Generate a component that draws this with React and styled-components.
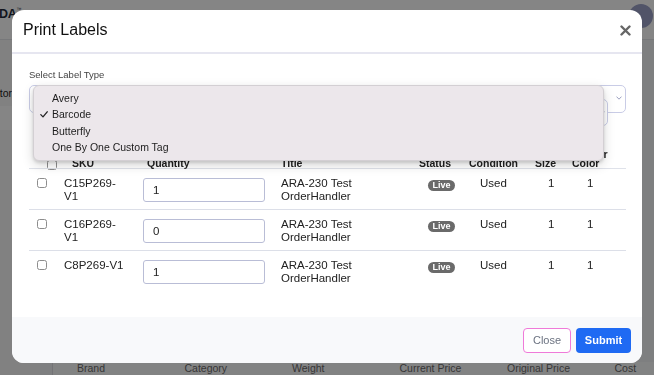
import React, { useState } from "react";
import styled, { createGlobalStyle } from "styled-components";

const GlobalStyle = createGlobalStyle`
  html, body {
    margin: 0;
    width: 100%;
    height: 100%;
    overflow: hidden;
    font-family: "Liberation Sans", Arial, sans-serif;
  }
  #root {
    height: 100%;
  }
`;

const labelTypes = ["Avery", "Barcode", "Butterfly", "One By One Custom Tag"];

const columns = [
  { key: "check", width: 29, headPad: 18, cellPad: 8 },
  { key: "sku", label: "SKU", width: 79, headPad: 14, cellPad: 6 },
  { key: "qty", label: "Quantity", width: 138, headPad: 10, cellPad: 6 },
  { key: "title", label: "Title", width: 136, headPad: 6, cellPad: 6 },
  { key: "status", label: "Status", width: 51, headPad: 8, cellPad: 17 },
  { key: "condition", label: "Condition", width: 65, headPad: 7, cellPad: 18 },
  { key: "size", label: "Size", width: 38, headPad: 8, cellPad: 21 },
  { key: "color", label: "Vendor Color", width: 61, headPad: 7, cellPad: 22 },
];

const initialRows = [
  { sku: "C15P269-V1", qty: "1" },
  { sku: "C16P269-V1", qty: "0" },
  { sku: "C8P269-V1", qty: "1" },
];

const backColumns = ["Brand", "Category", "Weight", "Current Price", "Original Price", "Cost"];

const Chevron = () => (
  <svg width="6" height="4" viewBox="0 0 6 4">
    <polyline points="0.5,0.6 3,3.2 5.5,0.6" fill="none" stroke="#9094b8" strokeWidth="0.9" />
  </svg>
);

const CheckMark = () => (
  <svg width="8" height="7" viewBox="0 0 8 7">
    <polyline points="0.8,3.6 3,5.9 7.2,0.8" fill="none" stroke="#222" strokeWidth="1.3" strokeLinecap="round" strokeLinejoin="round" />
  </svg>
);

const CloseIcon = () => (
  <svg width="11" height="11" viewBox="0 0 11 11">
    <path d="M1.5 1.5 L9.5 9.5 M9.5 1.5 L1.5 9.5" stroke="#666" strokeWidth="2.4" strokeLinecap="round" />
  </svg>
);

export default function App() {
  const [rows, setRows] = useState(initialRows);

  const setQty = (index, value) => {
    setRows(rows.map((row, i) => (i === index ? { ...row, qty: value } : row)));
  };

  return (
    <>
      <GlobalStyle />
      <Page>
        <TopBar>
          <Logo>
            DA<sup>™</sup>
          </Logo>
          <UserArea>
            <Avatar />
            <UserText>
              <span>Jo</span>
              <span>jo</span>
            </UserText>
          </UserArea>
        </TopBar>
        <Workspace>
          <Sidebar>
            <NavItem>Monitor</NavItem>
            <NavItem $active>Inventory</NavItem>
          </Sidebar>
          <Main>
            <ColumnBar>
              <ColumnLabel />
              {backColumns.map((name) => (
                <ColumnLabel key={name}>{name}</ColumnLabel>
              ))}
            </ColumnBar>
          </Main>
        </Workspace>
      </Page>

      <Overlay>
        <Modal>
          <ModalHeader>
            <ModalTitle>Print Labels</ModalTitle>
            <IconButton aria-label="Close">
              <CloseIcon />
            </IconButton>
          </ModalHeader>

          <ModalBody>
            <FieldLabel>Select Label Type</FieldLabel>
            <SelectWrap>
              <SelectBox>
                <Chevron />
              </SelectBox>
              <SecondSelect>
                <Chevron />
              </SecondSelect>
              <OptionMenu>
                {labelTypes.map((type) => (
                  <Option key={type}>
                    {type === "Barcode" && (
                      <Tick>
                        <CheckMark />
                      </Tick>
                    )}
                    {type}
                  </Option>
                ))}
              </OptionMenu>
            </SelectWrap>

            <Table>
              <colgroup>
                {columns.map((col) => (
                  <col key={col.key} style={{ width: col.width }} />
                ))}
              </colgroup>
              <thead>
                <tr>
                  {columns.map((col) => (
                    <HeadCell key={col.key} $pad={col.headPad}>
                      {col.key === "check" ? <Checkbox type="checkbox" $head /> : col.label}
                    </HeadCell>
                  ))}
                </tr>
              </thead>
              <tbody>
                {rows.map((row, i) => (
                  <Row key={row.sku}>
                    <Cell $pad={8} $top={9}>
                      <Checkbox type="checkbox" />
                    </Cell>
                    <SkuCell $pad={6}>{row.sku}</SkuCell>
                    <Cell $pad={6} $top={9}>
                      <QtyInput value={row.qty} onChange={(e) => setQty(i, e.target.value)} />
                    </Cell>
                    <Cell $pad={6}>ARA-230 Test OrderHandler</Cell>
                    <Cell $pad={17} $top={9}>
                      <Badge>Live</Badge>
                    </Cell>
                    <Cell $pad={18}>Used</Cell>
                    <Cell $pad={21}>1</Cell>
                    <Cell $pad={22}>1</Cell>
                  </Row>
                ))}
              </tbody>
            </Table>
          </ModalBody>

          <ModalFooter>
            <CloseButton>Close</CloseButton>
            <SubmitButton>Submit</SubmitButton>
          </ModalFooter>
        </Modal>
      </Overlay>
    </>
  );
}

/* page behind the dialog */

const Page = styled.div`
  height: 100vh;
  display: flex;
  flex-direction: column;
  background: #f2f3f5;
`;

const TopBar = styled.header`
  height: 40px;
  flex-shrink: 0;
  display: flex;
  justify-content: space-between;
  align-items: flex-start;
  background: #fff;
  border-bottom: 1px solid #e4e6ea;
  box-sizing: border-box;
`;

const Logo = styled.div`
  margin-left: -1px;
  padding-top: 6px;
  font-size: 12.5px;
  font-weight: 700;
  color: #1f2a3a;
  letter-spacing: -0.3px;

  sup {
    font-size: 5px;
    font-weight: 400;
    vertical-align: 7px;
  }
`;

const UserArea = styled.div`
  display: flex;
  gap: 4px;
  padding-top: 4px;
  margin-right: -14px;
`;

const Avatar = styled.div`
  width: 24px;
  height: 24px;
  border-radius: 50%;
  background: #9ba2c8;
`;

const UserText = styled.div`
  display: flex;
  flex-direction: column;
  font-size: 10px;
  line-height: 11px;
  color: #333;
`;

const Workspace = styled.div`
  flex: 1;
  display: flex;
  min-height: 0;
`;

const Sidebar = styled.nav`
  width: 40px;
  flex-shrink: 0;
  background: #f7f7f8;
  padding-top: 45px;
  display: flex;
  flex-direction: column;
  gap: 5px;
`;

const NavItem = styled.div`
  width: ${(p) => (p.$active ? "40px" : "12px")};
  height: ${(p) => (p.$active ? "24px" : "16px")};
  display: flex;
  justify-content: flex-end;
  align-items: center;
  overflow: hidden;
  white-space: nowrap;
  font-size: 10.5px;
  background: ${(p) => (p.$active ? "#ffffff" : "transparent")};
  color: ${(p) => (p.$active ? "transparent" : "#222")};
`;

const Main = styled.main`
  flex: 1;
  display: flex;
  flex-direction: column;
  justify-content: flex-end;
  padding-left: 12px;
`;

const ColumnBar = styled.div`
  height: 13px;
  display: grid;
  grid-template-columns: 13px repeat(6, 107.5px);
  background: #fafbfc;
  border-left: 1px solid #dcdde2;
`;

const ColumnLabel = styled.div`
  padding-left: 11px;
  font-size: 10.5px;
  line-height: 13px;
  color: #6a6a6a;
  white-space: nowrap;
`;

/* dialog */

const Overlay = styled.div`
  position: fixed;
  inset: 0;
  background: rgba(0, 0, 0, 0.48);
  padding: 10px 12px;
  display: flex;
  align-items: flex-start;
`;

const Modal = styled.div`
  width: 630px;
  height: 353px;
  display: flex;
  flex-direction: column;
  background: #fff;
  border-radius: 12px;
  overflow: hidden;
`;

const ModalHeader = styled.div`
  height: 44px;
  flex-shrink: 0;
  box-sizing: border-box;
  display: flex;
  justify-content: space-between;
  align-items: center;
  padding: 0 11px 2px 11px;
  border-bottom: 2px solid #e6e6f0;
`;

const ModalTitle = styled.h2`
  margin: 0;
  font-size: 16px;
  font-weight: 400;
  color: #111;
`;

const IconButton = styled.button`
  padding: 0;
  border: none;
  background: none;
  display: flex;
  cursor: pointer;
`;

const ModalBody = styled.div`
  flex: 1;
  padding: 15px 16px 0 17px;
`;

const FieldLabel = styled.div`
  font-size: 9.5px;
  line-height: 12px;
  color: #444;
  margin-bottom: 4px;
`;

const SelectWrap = styled.div`
  position: relative;
  height: 28px;
`;

const SelectBox = styled.div`
  height: 28px;
  box-sizing: border-box;
  display: flex;
  justify-content: flex-end;
  align-items: center;
  padding: 0 3px 2px 0;
  border: 1px solid #c9cce6;
  border-radius: 5px;
  background: #fff;
`;

const SecondSelect = styled(SelectBox)`
  position: absolute;
  top: 14px;
  left: 4px;
  right: 18px;
  height: 27px;
  padding: 0 2px 0 0;
`;

const OptionMenu = styled.div`
  position: absolute;
  top: 0;
  left: 4px;
  right: 22px;
  padding: 4px 0 4px;
  background: #ece7eb;
  border: 1px solid #d3cfd3;
  border-radius: 6px;
  box-shadow: 0 2px 3px rgba(0, 0, 0, 0.12), 0 4px 12px rgba(0, 0, 0, 0.16);
`;

const Option = styled.div`
  position: relative;
  height: 16.4px;
  line-height: 16.4px;
  padding-left: 18px;
  font-size: 10.5px;
  color: #1d1d1d;
`;

const Tick = styled.span`
  position: absolute;
  left: 6px;
  top: 5px;
  display: flex;
`;

const Table = styled.table`
  width: 597px;
  margin-top: 37px;
  border-collapse: collapse;
  table-layout: fixed;
  font-size: 11.5px;
  color: #222;
`;

const HeadCell = styled.th`
  padding: 0 0 0 ${(p) => p.$pad}px;
  vertical-align: bottom;
  text-align: left;
  font-size: 10.5px;
  line-height: 9px;
  font-weight: 700;
  color: #222;
  border-bottom: 1px solid #dfe2ea;
`;

const Row = styled.tr`
  height: 41px;

  &:not(:last-child) td {
    border-bottom: 1px solid #dcdfe8;
  }
`;

const Cell = styled.td`
  padding: ${(p) => p.$top || 8}px 0 0 ${(p) => p.$pad}px;
  vertical-align: top;
  line-height: 13px;
`;

const SkuCell = styled(Cell)`
  padding-right: 11px;
`;

const Checkbox = styled.input`
  appearance: none;
  display: block;
  margin: 0 0 ${(p) => (p.$head ? "-2px" : "0")};
  width: 10px;
  height: 10px;
  border: 1px solid #8d8d8d;
  border-radius: 2.5px;
  background: #fff;
`;

const QtyInput = styled.input`
  width: 122px;
  height: 24px;
  box-sizing: border-box;
  padding: 0 9px;
  border: 1px solid #b9bdd6;
  border-radius: 3px;
  font-family: "Liberation Sans", Arial, sans-serif;
  font-size: 11.5px;
  color: #222;
  outline: none;
`;

const Badge = styled.span`
  display: inline-block;
  padding: 0 4.5px;
  border-radius: 6px;
  background: #6a6a6a;
  color: #fff;
  font-size: 9px;
  line-height: 11px;
  font-weight: 700;
`;

const ModalFooter = styled.div`
  height: 46px;
  flex-shrink: 0;
  display: flex;
  justify-content: flex-end;
  align-items: center;
  gap: 5px;
  padding-right: 11px;
  background: #f8f9fb;
`;

const CloseButton = styled.button`
  width: 48px;
  height: 25px;
  padding: 0;
  border: 1px solid #ef7ad9;
  border-radius: 4px;
  background: #fff;
  color: #6b7280;
  font-family: "Liberation Sans", Arial, sans-serif;
  font-size: 11px;
`;

const SubmitButton = styled.button`
  width: 55px;
  height: 25px;
  padding: 0;
  border: none;
  border-radius: 4px;
  background: #1f6af3;
  color: #fff;
  font-family: "Liberation Sans", Arial, sans-serif;
  font-size: 11px;
  font-weight: 700;
`;
